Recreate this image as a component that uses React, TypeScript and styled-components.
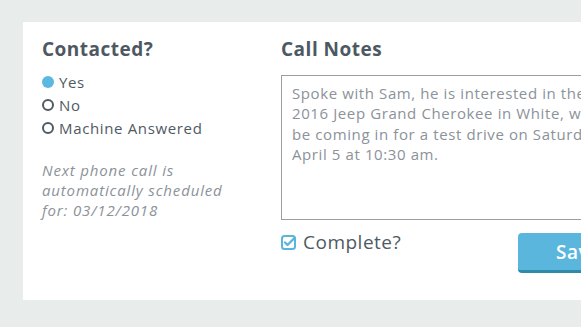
import React from "react";
import styled, { createGlobalStyle } from "styled-components";

const GlobalStyle = createGlobalStyle`
  html, body {
    margin: 0;
    padding: 0;
    background-color: #e8ecea;
    overflow: hidden;
  }
  body {
    font-family: "Open Sans", Lato, sans-serif;
  }
`;

const Page = styled.div`
  width: 581px;
  height: 327px;
  padding: 22px 0 0 23px;
  box-sizing: border-box;
  overflow: hidden;
`;

const Card = styled.div`
  display: grid;
  grid-template-columns: 239px 1fr;
  width: 700px;
  height: 278px;
  box-sizing: border-box;
  padding: 16px 0 0 19px;
  background-color: #ffffff;
`;

const Column = styled.div`
  display: flex;
  flex-direction: column;
`;

const Heading = styled.h2`
  margin: 0;
  font-size: 19px;
  line-height: 22px;
  font-weight: 700;
  letter-spacing: 0.5px;
  color: #4e5862;
`;

const RadioList = styled.div`
  display: flex;
  flex-direction: column;
  gap: 1px;
  margin-top: 11px;
`;

const RadioRow = styled.label`
  display: flex;
  align-items: center;
  gap: 5px;
  font-size: 15px;
  line-height: 22px;
  letter-spacing: 0.65px;
  color: #4f5a64;
`;

const RadioDot = styled.span<{ $checked?: boolean }>`
  flex: none;
  width: 12px;
  height: 12px;
  box-sizing: border-box;
  border-radius: 50%;
  border: ${({ $checked }) => ($checked ? "none" : "2px solid #4f5a64")};
  background-color: ${({ $checked }) => ($checked ? "#5bb8e0" : "transparent")};
`;

const Hint = styled.p`
  margin: 21px 0 0;
  width: 195px;
  font-size: 15px;
  line-height: 20px;
  font-style: italic;
  letter-spacing: 0.85px;
  color: #8b9299;
`;

const Notes = styled.div`
  margin-top: 15px;
  width: 420px;
  height: 145px;
  box-sizing: border-box;
  padding: 7px 10px;
  border: 1.5px solid #9a9ea2;
  font-size: 15px;
  line-height: 20.3px;
  letter-spacing: 0.6px;
  color: #8b9299;
  white-space: pre;
`;

const Footer = styled.div`
  display: flex;
  align-items: flex-start;
  margin-top: 10px;
`;

const CheckLabel = styled.label`
  display: flex;
  align-items: center;
  gap: 7px;
  width: 237px;
  font-size: 19px;
  line-height: 24px;
  letter-spacing: 0.5px;
  color: #4f5a64;
`;

const SaveButton = styled.button`
  margin-top: 3px;
  width: 140px;
  height: 40px;
  padding: 0 0 0 38px;
  text-align: left;
  border: none;
  border-bottom: 3px solid #2e8aab;
  border-radius: 4px;
  background-color: #5bb6de;
  color: #ffffff;
  font-family: inherit;
  font-size: 19px;
  font-weight: 600;
  letter-spacing: 0.5px;
`;

const CheckIcon = () => (
  <svg width="15" height="15" viewBox="0 0 15 15">
    <rect x="1" y="1" width="13" height="13" rx="2.5" fill="none" stroke="#5ab4dc" strokeWidth="2" />
    <path d="M4 7.5 L6.5 10 L13.5 3" fill="none" stroke="#5ab4dc" strokeWidth="2.4" strokeLinecap="round" strokeLinejoin="round" />
  </svg>
);

const noteText = `Spoke with Sam, he is interested in the
2016 Jeep Grand Cherokee in White, will
be coming in for a test drive on Saturday,
April 5 at 10:30 am.`;

export default function App() {
  return (
    <>
      <GlobalStyle />
      <Page>
        <Card>
          <Column>
            <Heading>Contacted?</Heading>
            <RadioList>
              <RadioRow>
                <RadioDot $checked />
                Yes
              </RadioRow>
              <RadioRow>
                <RadioDot />
                No
              </RadioRow>
              <RadioRow>
                <RadioDot />
                Machine Answered
              </RadioRow>
            </RadioList>
            <Hint>Next phone call is automatically scheduled for: 03/12/2018</Hint>
          </Column>
          <Column>
            <Heading>Call Notes</Heading>
            <Notes>{noteText}</Notes>
            <Footer>
              <CheckLabel>
                <CheckIcon />
                Complete?
              </CheckLabel>
              <SaveButton>Save</SaveButton>
            </Footer>
          </Column>
        </Card>
      </Page>
    </>
  );
}
